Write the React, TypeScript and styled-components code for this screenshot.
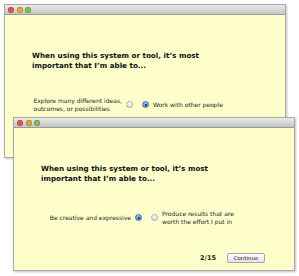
import React from "react";
import styled, { createGlobalStyle } from "styled-components";

const GlobalStyle = createGlobalStyle`
  html, body {
    margin: 0;
    padding: 0;
    background: #ffffff;
  }
  body {
    font-family: "DejaVu Sans", "Liberation Sans", sans-serif;
  }
`;

const Desktop = styled.div`
  position: relative;
  width: 299px;
  height: 276px;
  overflow: hidden;
  background: #ffffff;
`;

const Window = styled.div<{ $x: number; $y: number }>`
  position: absolute;
  left: ${(p) => p.$x}px;
  top: ${(p) => p.$y}px;
  width: 282px;
  height: 154px;
  box-sizing: border-box;
  display: flex;
  flex-direction: column;
  background: #ffffcc;
  border: 1px solid #a9a9a9;
  box-shadow: 1px 1px 2px rgba(0, 0, 0, 0.25);
`;

const TitleBar = styled.div`
  display: flex;
  align-items: center;
  gap: 2.5px;
  height: 9px;
  padding-left: 3px;
  background: linear-gradient(#ebebeb, #c4c4c4);
  border-bottom: 1px solid #9a9a9a;
`;

const Light = styled.span<{ $color: string }>`
  width: 6px;
  height: 6px;
  border-radius: 50%;
  background: ${(p) => p.$color};
  box-shadow: inset 0 0 0 0.5px rgba(0, 0, 0, 0.3);
`;

const Body = styled.div`
  flex: 1;
  display: flex;
  flex-direction: column;
  padding: 36px 0 0 0;
`;

const Question = styled.h1`
  margin: 0 0 0 27px;
  font-size: 7.2px;
  line-height: 9.5px;
  font-weight: bold;
  color: #111;
`;

const Options = styled.div`
  display: grid;
  grid-template-columns: 128px 1fr;
  column-gap: 9px;
  align-items: center;
  margin-top: 27px;
`;

const Option = styled.label<{ $side: "left" | "right" }>`
  display: flex;
  align-items: center;
  gap: 4px;
  justify-content: ${(p) => (p.$side === "left" ? "flex-end" : "flex-start")};
  font-size: 6px;
  line-height: 7.5px;
  color: #1e1e1e;
`;

const Radio = styled.span<{ $checked?: boolean }>`
  flex: none;
  position: relative;
  width: 7px;
  height: 7px;
  box-sizing: border-box;
  border-radius: 50%;
  border: 1px solid ${(p) => (p.$checked ? "#3c6fb4" : "#a8a8a8")};
  background: ${(p) =>
    p.$checked
      ? "linear-gradient(#9ec6f2, #4f8fdc)"
      : "linear-gradient(#ffffff, #dcdcdc)"};
  &::after {
    content: "";
    display: ${(p) => (p.$checked ? "block" : "none")};
    position: absolute;
    left: 1.5px;
    top: 1.5px;
    width: 2px;
    height: 2px;
    border-radius: 50%;
    background: #16243c;
  }
`;

const Footer = styled.div`
  margin-top: auto;
  display: flex;
  justify-content: flex-end;
  align-items: center;
  gap: 11px;
  padding: 0 29px 7px 0;
`;

const Progress = styled.span`
  font-size: 6.5px;
  font-weight: bold;
  color: #222;
`;

const ContinueButton = styled.button`
  width: 38px;
  height: 10px;
  padding: 0;
  font-family: inherit;
  font-size: 5.5px;
  color: #222;
  border: 1px solid #a5a5a5;
  border-radius: 2px;
  background: linear-gradient(#ffffff, #e6e6e6);
`;

type Choice = { text: string[]; checked: boolean };

type Screen = {
  x: number;
  y: number;
  left: Choice;
  right: Choice;
  step: string;
};

const QUESTION = ["When using this system or tool, it\u2019s most", "important that I\u2019m able to..."];

const screens: Screen[] = [
  {
    x: 4,
    y: 4,
    left: { text: ["Explore many different ideas,", "outcomes, or possibilities"], checked: false },
    right: { text: ["Work with other people"], checked: true },
    step: "1/15",
  },
  {
    x: 13,
    y: 117,
    left: { text: ["Be creative and expressive"], checked: true },
    right: { text: ["Produce results that are", "worth the effort I put in"], checked: false },
    step: "2/15",
  },
];

const Lines = ({ lines }: { lines: string[] }) => (
  <span>
    {lines.map((l, i) => (
      <React.Fragment key={i}>
        {i > 0 && <br />}
        {l}
      </React.Fragment>
    ))}
  </span>
);

const App = () => {
  return (
    <Desktop>
      <GlobalStyle />
      {screens.map((s, index) => (
        <Window key={index} $x={s.x} $y={s.y}>
          <TitleBar>
            <Light $color="#e2574c" />
            <Light $color="#e3a53a" />
            <Light $color="#7fbf5a" />
          </TitleBar>
          <Body>
            <Question>
              <Lines lines={QUESTION} />
            </Question>
            <Options>
              <Option $side="left">
                <Lines lines={s.left.text} />
                <Radio $checked={s.left.checked} />
              </Option>
              <Option $side="right">
                <Radio $checked={s.right.checked} />
                <Lines lines={s.right.text} />
              </Option>
            </Options>
            <Footer>
              <Progress>{s.step}</Progress>
              <ContinueButton>Continue</ContinueButton>
            </Footer>
          </Body>
        </Window>
      ))}
    </Desktop>
  );
};

export default App;
